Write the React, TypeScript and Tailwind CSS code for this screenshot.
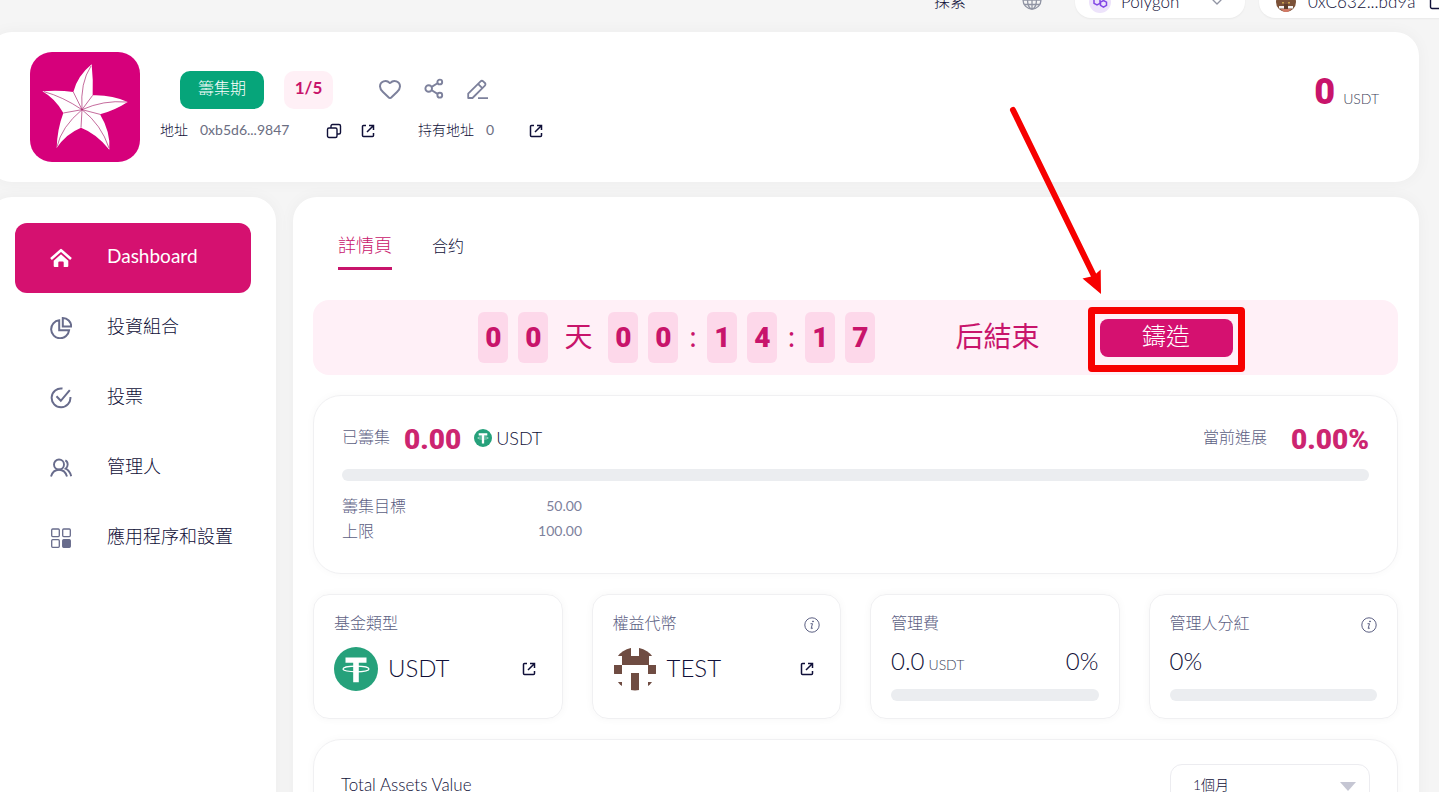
import { useState } from "react"
import type { ReactNode } from "react"
import { ChevronDown, Heart } from "lucide-react"

const LinkIcon = () => (
  <svg width="14" height="14" viewBox="0 0 14 14" fill="none" stroke="currentColor" strokeWidth="1.5">
    <path d="M5 1.5H2.5a1 1 0 0 0-1 1v9a1 1 0 0 0 1 1h9a1 1 0 0 0 1-1V9" />
    <path d="M8 1.5h4.5V6M12.3 1.7 6 8" />
  </svg>
)

const CopyIcon = () => (
  <svg width="16" height="16" viewBox="0 0 16 16" fill="none" stroke="currentColor" strokeWidth="1.4">
    <rect x="1.5" y="5" width="9.5" height="9.5" rx="1.5" />
    <path d="M5 5V3a1.5 1.5 0 0 1 1.5-1.5H13A1.5 1.5 0 0 1 14.5 3v6.5A1.5 1.5 0 0 1 13 11h-2" />
  </svg>
)

const InfoIcon = () => (
  <svg width="16" height="16" viewBox="0 0 16 16" fill="none" stroke="currentColor" strokeWidth="1">
    <circle cx="8" cy="8" r="7.2" />
    <path d="M6.5 6.7h2L7.2 11.2c-.1.5.3.6.8.3l.9-.6" />
    <circle cx="9" cy="4.4" r=".5" fill="currentColor" />
  </svg>
)

const ShareIcon = () => (
  <svg width="20" height="21" viewBox="0 0 20 21" fill="none" stroke="currentColor" strokeWidth="1.9">
    <circle cx="4.7" cy="10.5" r="3.3" />
    <circle cx="15.8" cy="4" r="2.4" />
    <circle cx="15.8" cy="17.2" r="2.4" />
    <path d="m7.7 8.9 5.8-3.6M7.7 12.2l5.8 3.7" />
  </svg>
)

const EditIcon = () => (
  <svg width="21" height="21" viewBox="0 0 21 21" fill="none" stroke="currentColor" strokeWidth="1.8" strokeLinejoin="round">
    <path d="M1.2 19v-4.3L13.6 2.3a1.8 1.8 0 0 1 2.6 0l1.7 1.7a1.8 1.8 0 0 1 0 2.6L5.5 19Z" />
    <path d="m11 4.9 4.3 4.3M11 19.2h10" />
  </svg>
)

const HomeIcon = () => (
  <svg width="22" height="20" viewBox="0 0 22 20" fill="none">
    <path d="M1 11 11 2.2 21 11" stroke="currentColor" strokeWidth="2.6" strokeLinejoin="round" />
    <path d="M11 6.3 3.7 12.7V18q0 1 1 1h3.6v-4.5q0-1 1-1h3.4q1 0 1 1V19h3.6q1 0 1-1v-5.3Z" fill="currentColor" />
  </svg>
)

const PieIcon = () => (
  <svg width="22" height="22" viewBox="0 0 22 22" fill="none" stroke="currentColor" strokeWidth="2">
    <path d="M9.2 3.3a9 9 0 1 0 9.9 9.9H9.2Z" />
    <path d="M12.8 1v8.4h8.4A8.4 8.4 0 0 0 12.8 1Z" />
  </svg>
)

const VoteIcon = () => (
  <svg width="22" height="22" viewBox="0 0 22 22" fill="none" stroke="currentColor" strokeWidth="2">
    <path d="M12.5 1.6A9.4 9.4 0 1 0 20.4 10" />
    <path d="m6.5 9.3 4.3 4.5 9-10.6" />
  </svg>
)

const PeopleIcon = () => (
  <svg width="22" height="22" viewBox="0 0 22 22" fill="none" stroke="currentColor" strokeWidth="1.9">
    <circle cx="9" cy="7.5" r="5" />
    <path d="M1 19.5c1.2-4 4.3-6.7 8-6.7s6.8 2.7 8 6.7M15.3 3.3c3 1.3 3.2 6.2.3 8.4 2.7 1.3 4.7 3.9 5.6 7.5" />
  </svg>
)

const AppsIcon = () => (
  <svg width="22" height="22" viewBox="0 0 22 22" fill="none" stroke="currentColor" strokeWidth="1.3">
    <rect x="1.7" y="2" width="7.6" height="7.6" rx="1" />
    <rect x="12.7" y="2" width="7.6" height="7.6" rx="1" />
    <rect x="1.7" y="12.7" width="7.6" height="7.6" rx="1" />
    <rect x="12.7" y="12.7" width="7.6" height="7.6" rx="1" fill="currentColor" />
  </svg>
)

const GlobeIcon = () => (
  <svg width="20" height="20" viewBox="0 0 20 20" fill="none" stroke="currentColor" strokeWidth="1.3">
    <circle cx="10" cy="10" r="9" />
    <ellipse cx="10" cy="10" rx="4.5" ry="9" />
    <path d="M10 1v18M1 10h18M2.5 5.5h15M2.5 14.5h15" />
  </svg>
)

const StarLogo = () => (
  <svg className="size-[110px] shrink-0 rounded-[22px] bg-[#d6007b]" viewBox="0 0 330 330">
    <path
      fill="#fff"
      d="M185 37Q190 84 188 130Q245 128 293 150Q255 175 210 187Q242 240 238 293Q200 245 153 227Q107 246 80 288Q82 230 100 183Q76 140 37 118Q85 114 130 120Q142 72 185 37Z"
    />
    <g fill="none" stroke="#a8216b" strokeWidth="2">
      <path d="M156 173Q150 92 183 42M156 173Q220 144 290 150M156 173Q214 218 237 288M156 173Q94 225 81 284M156 173Q98 134 42 119" />
      <path d="M156 173 130 120M156 173l32-43M156 173l54 14M156 173l-3 54M156 173l-56 10" />
    </g>
  </svg>
)

const Tether = ({ size }: { size: number }) => (
  <svg width={size} height={size} viewBox="0 0 44 44" className="shrink-0">
    <circle cx="22" cy="22" r="22" fill="#26a17b" />
    <path d="M11.5 10.5h21v5.2h-7.7v19.5h-5.6V15.7h-7.7Z" fill="#fff" />
    <ellipse cx="22" cy="22" rx="13" ry="2.8" fill="none" stroke="#fff" strokeWidth="1.2" />
  </svg>
)

const TokenAvatar = () => (
  <svg width="44" height="44" viewBox="0 0 44 44" className="shrink-0">
    <clipPath id="token">
      <circle cx="22" cy="22" r="21.5" />
    </clipPath>
    <path
      clipPath="url(#token)"
      fill="#6f4c42"
      d="M0 1h18v8h8V1h18v8h-8v9H9V9H0ZM1 18h8v9H1ZM35 18h8v9h-8ZM18 26h8v18h-8ZM1 35h8v8H1ZM35 35h8v8h-8Z"
    />
  </svg>
)

const Header = () => (
  <header className="-mt-[18px] -mr-10 flex h-9 shrink-0 items-center justify-end">
    <a href="#explore" className="pt-0.5 text-base">探索</a>
    <button aria-label="Language" className="ml-14 text-[#9094a3]">
      <GlobeIcon />
    </button>
    <button className="ml-[33px] flex h-9 w-[170px] items-center rounded-2xl bg-white pt-1 pr-5 pl-[14px] shadow-xs">
      <svg width="22" height="22" viewBox="0 0 22 22" fill="none">
        <circle cx="11" cy="11" r="11" fill="#ede3fb" />
        <path d="m8 7 3 1.700v3.600L8 14l-3-1.700V8.700ZM14.500 9.500l3 1.700v3.200l-3 1.700-3-1.700v-3.200Z" stroke="#8247e5" strokeWidth="1.5" />
      </svg>
      <span className="ml-[10px] text-[17px] leading-5">Polygon</span>
      <ChevronDown size={16} className="ml-auto text-[#9094a3]" />
    </button>
    <button className="ml-[14px] flex h-9 w-[200px] items-center rounded-2xl bg-white pt-1 pl-[17px] whitespace-nowrap shadow-xs">
      <svg width="20" height="20" viewBox="0 0 20 20">
        <circle cx="10" cy="10" r="10" fill="#7b5138" />
        <path d="M3 14h14v2.500H3Z" fill="#f5f5f5" />
        <path d="M8 12h4v5H8Z" fill="#5e3d2a" />
        <path d="M4.500 17h11L12 20H8Z" fill="#d07a66" />
        <path d="M6 10h2v1.500H6ZM12 10h2v1.500h-2Z" fill="#c9a24d" />
      </svg>
      <span className="ml-3 text-[17px] leading-5">0xC632...bd9a</span>
      <span className="ml-[14px]">
        <CopyIcon />
      </span>
    </button>
  </header>
)

const FundHeader = () => (
  <section className="-ml-3 mt-[14px] flex h-[150px] shrink-0 items-start rounded-3xl bg-white pt-5 pr-10 pl-[42px] shadow-[0_0_16px_rgba(0,0,0,0.04)]">
    <StarLogo />
    <div className="ml-5 pt-[19px]">
      <div className="ml-5 flex items-center text-[#7d819c]">
        <span className="flex h-[38px] w-[84px] items-center justify-center rounded-[10px] bg-[#06a57a] pb-1 text-base text-white">籌集期</span>
        <span className="ml-5 flex h-[38px] w-[49px] items-center justify-center rounded-[10px] bg-[#fff0f6] pb-1 text-[17px] font-bold text-[#c8146b]">1/5</span>
        <button aria-label="Like" className="ml-[45px] pb-0.5"><Heart size={24} strokeWidth={2} /></button>
        <button aria-label="Share" className="ml-[22px] pb-1"><ShareIcon /></button>
        <button aria-label="Edit" className="ml-[23px] pb-0.5"><EditIcon /></button>
      </div>
      <div className="mt-3 flex h-5 items-center text-sm">
        <span className="pb-0.5">地址</span>
        <span className="ml-3 w-[94px] pb-0.5 font-normal text-[#6b6e82]">0xb5d6...9847</span>
        <button aria-label="Copy" className="ml-8"><CopyIcon /></button>
        <a href="#address" aria-label="Open address" className="ml-[19px]"><LinkIcon /></a>
        <span className="ml-[43px] pb-0.5">持有地址</span>
        <span className="ml-3 pb-0.5 font-normal text-[#6b6e82]">0</span>
        <a href="#holders" aria-label="Open holders" className="ml-[35px]"><LinkIcon /></a>
      </div>
    </div>
    <div className="ml-auto flex items-baseline pt-4">
      <span className="font-[Roboto] text-[36px] leading-[48px] font-black text-[#c8146b]">0</span>
      <span className="ml-2 text-sm text-[#3d3f5a]">USDT</span>
    </div>
  </section>
)

const navItems = [
  { name: "Dashboard", icon: <HomeIcon /> },
  { name: "投資組合", icon: <PieIcon /> },
  { name: "投票", icon: <VoteIcon /> },
  { name: "管理人", icon: <PeopleIcon /> },
  { name: "應用程序和設置", icon: <AppsIcon /> },
]

const Sidebar = () => {
  const [active, setActive] = useState("Dashboard")

  return (
    <nav className="-ml-3 w-72 shrink-0 rounded-t-3xl bg-white pt-[26px] pr-[25px] pl-[27px] shadow-[0_0_16px_rgba(0,0,0,0.04)]">
      {navItems.map((item) => (
        <a
          key={item.name}
          href={"#" + item.name}
          onClick={() => setActive(item.name)}
          className={
            active === item.name
              ? "flex h-[70px] items-center rounded-xl bg-[#d51170] pl-[35px] text-[19px] font-normal text-white"
              : "flex h-[70px] items-center rounded-xl pl-[35px] text-lg"
          }
        >
          <span className={active === item.name ? "" : "text-[#686c8c]"}>{item.icon}</span>
          <span className="ml-[35px] pb-1">{item.name}</span>
        </a>
      ))}
    </nav>
  )
}

const Digit = ({ children }: { children: ReactNode }) => (
  <span className="flex h-[51px] w-[30px] items-center justify-center rounded-md bg-[#fdd8ea] font-[Roboto] text-[28px] font-black">{children}</span>
)

const Countdown = () => (
  <div className="mt-[30px] flex h-[75px] items-center justify-center rounded-2xl bg-[#fff0f7] text-[28px] font-normal text-[#c8146b]">
    <div className="flex items-center gap-[10px]">
      <Digit>0</Digit>
      <Digit>0</Digit>
      <span className="w-10 pb-1 text-center">天</span>
      <Digit>0</Digit>
      <Digit>0</Digit>
      <span className="w-[9px] pb-1 text-center">:</span>
      <Digit>1</Digit>
      <Digit>4</Digit>
      <span className="w-[8px] pb-1 text-center">:</span>
      <Digit>1</Digit>
      <Digit>7</Digit>
    </div>
    <span className="ml-20 pb-1">后結束</span>
    <div className="relative ml-[60px]">
      <button className="flex h-[38px] w-[133px] items-center justify-center rounded-lg bg-[#d51170] pb-1 text-2xl font-light text-white">鑄造</button>
      <div className="pointer-events-none absolute -top-3 -right-3 -bottom-[15px] -left-3 rounded border-[7px] border-[#f70000]" />
      <svg className="pointer-events-none absolute bottom-[60px] -left-[93px] z-10" width="100" height="194" viewBox="0 0 100 194">
        <path d="M6 7 87 173" stroke="#f70000" strokeWidth="6" strokeLinecap="round" />
        <path d="M94 191 75.500 175.500l11-2.500 7.200-6.500Z" fill="#f70000" />
      </svg>
    </div>
  </div>
)

const Progress = () => (
  <section className="mt-5 h-[179px] rounded-[28px] border border-[#f0f0f2] px-7 pt-6 text-[#5c6083] shadow-[0_0_8px_rgba(0,0,0,0.03)]">
    <div className="flex h-9 items-center text-base">
      <span className="pb-0.5">已籌集</span>
      <span className="ml-[14px] pt-1 font-[Roboto] text-[28px] font-black text-[#cc2570]">0.00</span>
      <span className="ml-[13px] flex items-center gap-1 text-lg text-[#0f0f38]">
        <Tether size={18} />
        USDT
      </span>
      <span className="ml-auto pb-0.5">當前進展</span>
      <span className="ml-6 pt-1 font-[Roboto] text-[28px] font-black text-[#cc2570]">0.00%</span>
    </div>
    <div className="mt-[13px] h-3 rounded-full bg-[#ebedf0]" />
    <dl className="mt-3 w-60">
      <div className="flex justify-between">
        <dt className="text-base leading-[25px]">籌集目標</dt>
        <dd className="text-sm leading-[25px] font-normal text-[#7d819c]">50.00</dd>
      </div>
      <div className="flex justify-between">
        <dt className="text-base leading-[25px]">上限</dt>
        <dd className="text-sm leading-[25px] font-normal text-[#7d819c]">100.00</dd>
      </div>
    </dl>
  </section>
)

const StatCard = ({ title, info, children }: { title: string; info?: boolean; children: ReactNode }) => (
  <article className="h-[125px] rounded-2xl border border-[#f0f0f2] px-5 pt-4 shadow-[0_0_8px_rgba(0,0,0,0.04)]">
    <div className="flex h-6 items-center justify-between text-[#5c6083]">
      <h3 className="text-base">{title}</h3>
      {info && (
        <button aria-label="Info" className="pt-1">
          <InfoIcon />
        </button>
      )}
    </div>
    {children}
  </article>
)

const Token = ({ name, icon }: { name: string; icon: ReactNode }) => (
  <div className="mt-3 flex items-center">
    {icon}
    <span className="ml-[10px] pb-0.5 text-2xl">{name}</span>
    <a href={"#" + name} aria-label={name} className="mr-[6px] ml-auto">
      <LinkIcon />
    </a>
  </div>
)

const Dashboard = () => {
  const [range, setRange] = useState("1")

  return (
    <main className="min-w-0 flex-1 rounded-t-3xl bg-white pt-[34px] pr-[21px] pl-5 shadow-[0_0_16px_rgba(0,0,0,0.04)]">
      <div className="flex h-[39px] items-start gap-10 pl-[25px]">
        <button className="h-[39px] border-b-3 border-[#c8146b] pb-2 text-lg text-[#c8146b]">詳情頁</button>
        <button className="h-[30px] text-base">合约</button>
      </div>
      <Countdown />
      <Progress />
      <div className="mt-5 grid grid-cols-4 gap-[29px]">
        <StatCard title="基金類型">
          <Token name="USDT" icon={<Tether size={44} />} />
        </StatCard>
        <StatCard title="權益代幣" info>
          <Token name="TEST" icon={<TokenAvatar />} />
        </StatCard>
        <StatCard title="管理費">
          <div className="mt-[10px] flex items-baseline text-2xl leading-8">
            0.0<span className="ml-1 text-sm text-[#3d3f5a]">USDT</span>
            <span className="ml-auto">0%</span>
          </div>
          <div className="mt-3 h-3 rounded-full bg-[#ebedf0]" />
        </StatCard>
        <StatCard title="管理人分紅" info>
          <div className="mt-[10px] text-2xl leading-8">0%</div>
          <div className="mt-3 h-3 rounded-full bg-[#ebedf0]" />
        </StatCard>
      </div>
      <section className="mt-5 flex h-[360px] items-start justify-between rounded-[28px] border border-[#f0f0f2] px-[27px] pt-6 shadow-[0_0_8px_rgba(0,0,0,0.03)]">
        <h2 className="text-[17px] leading-[42px]">Total Assets Value</h2>
        <div className="relative">
          <select
            aria-label="Period"
            value={range}
            onChange={(e) => setRange(e.target.value)}
            className="h-[42px] w-[200px] appearance-none rounded-xl border border-[#ececf0] bg-white px-[22px] text-sm"
          >
            <option value="1">1個月</option>
            <option value="3">3個月</option>
          </select>
          <svg className="pointer-events-none absolute top-[18px] right-[14px]" width="16" height="9" viewBox="0 0 16 9" fill="#c5c6d3">
            <path d="M0 0h16L8 9Z" />
          </svg>
        </div>
      </section>
    </main>
  )
}

export default function App() {
  return (
    <div className="flex h-screen flex-col overflow-hidden bg-[#f5f5f5] pr-5 font-[Lato,'Noto_Sans_CJK_TC',sans-serif] font-light text-[#0f0f38]">
      <Header />
      <FundHeader />
      <div className="mt-[15px] flex flex-1 gap-[17px]">
        <Sidebar />
        <Dashboard />
      </div>
    </div>
  )
}
